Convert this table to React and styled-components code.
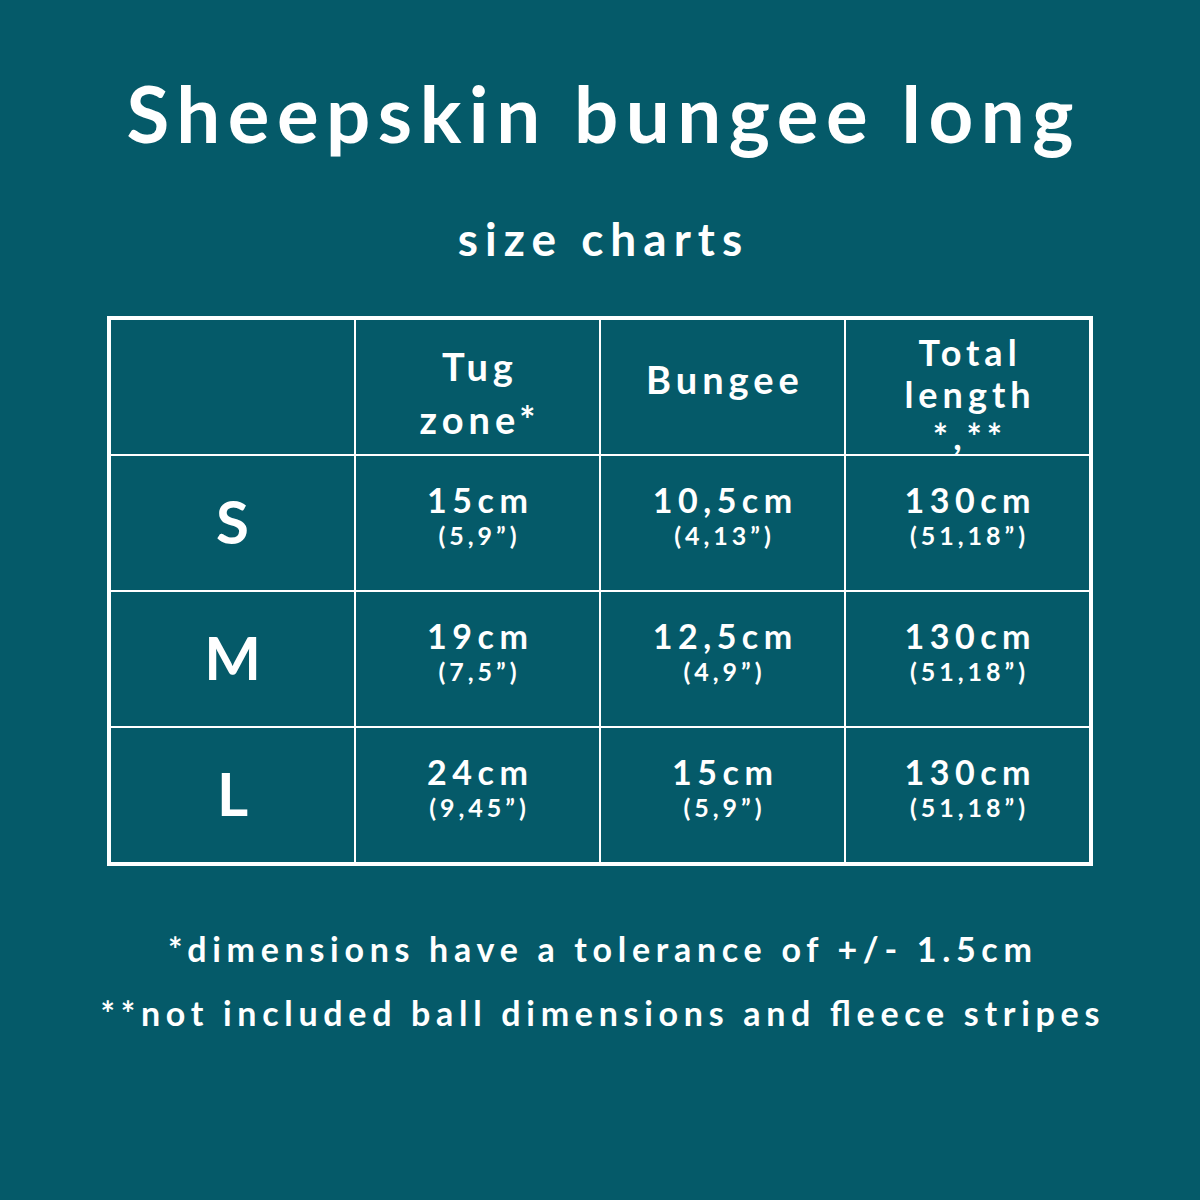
import React from 'react';
import styled, { createGlobalStyle } from 'styled-components';

const GlobalStyle = createGlobalStyle`
  html, body {
    margin: 0;
    padding: 0;
    background: #055a69;
  }
  body {
    font-family: "Lato", "DejaVu Sans", sans-serif;
    color: #ffffff;
  }
`;

const Page = styled.div`
  width: 1200px;
  height: 1200px;
  background: #055a69;
  display: flex;
  flex-direction: column;
  align-items: center;
  box-sizing: border-box;
  padding-top: 68px;
`;

const Title = styled.h1`
  margin: 0;
  font-size: 78px;
  font-weight: 700;
  letter-spacing: 7.5px;
  padding-left: 7.5px;
  line-height: 90px;
`;

const Subtitle = styled.h2`
  margin: 53px 0 0;
  font-size: 46px;
  font-weight: 700;
  letter-spacing: 7px;
  padding-left: 7px;
  line-height: 56px;
`;

const Table = styled.div`
  margin-top: 49px;
  display: grid;
  grid-template-columns: repeat(4, 243px);
  grid-template-rows: repeat(4, 134px);
  gap: 2px;
  background: #ffffff;
  border: 4px solid #ffffff;
`;

const Cell = styled.div`
  background: #055a69;
  display: flex;
  flex-direction: column;
  align-items: center;
  justify-content: center;
  text-align: center;
  overflow: visible;
  box-sizing: border-box;
  padding-top: ${(p) => p.$top || 0}px;
  padding-bottom: ${(p) => p.$bottom || 0}px;
`;

const HeadText = styled.div`
  font-size: ${(p) => p.$size || 38}px;
  font-weight: 700;
  letter-spacing: 5px;
  padding-left: 5px;
  line-height: ${(p) => p.$lh || 44}px;
`;

const SizeLabel = styled.div`
  font-size: 60px;
  font-weight: 700;
  line-height: 60px;
`;

const Metric = styled.div`
  font-size: 34px;
  font-weight: 700;
  letter-spacing: 5.5px;
  padding-left: 5.5px;
  line-height: 40px;
`;

const Imperial = styled.div`
  font-size: 25px;
  font-weight: 700;
  letter-spacing: 4px;
  padding-left: 4px;
  line-height: 30px;
`;

const Notes = styled.div`
  margin-top: 62px;
  display: flex;
  flex-direction: column;
  align-items: center;
  gap: 22px;
`;

const Note = styled.p`
  margin: 0;
  font-size: 34px;
  font-weight: 700;
  letter-spacing: 5.7px;
  padding-left: 5.7px;
  line-height: 42px;
`;

const rows = [
  { size: 'S', values: [['15cm', '(5,9”)'], ['10,5cm', '(4,13”)'], ['130cm', '(51,18”)']] },
  { size: 'M', values: [['19cm', '(7,5”)'], ['12,5cm', '(4,9”)'], ['130cm', '(51,18”)']] },
  { size: 'L', values: [['24cm', '(9,45”)'], ['15cm', '(5,9”)'], ['130cm', '(51,18”)']] },
];

const App = () => {
  return (
    <>
      <GlobalStyle />
      <Page>
        <Title>Sheepskin bungee long</Title>
        <Subtitle>size charts</Subtitle>
        <Table>
          <Cell />
          <Cell $top={11}>
            <HeadText $lh={53}>Tug<br />zone*</HeadText>
          </Cell>
          <Cell $bottom={16}>
            <HeadText>Bungee</HeadText>
          </Cell>
          <Cell $top={14}>
            <HeadText $lh={42} $size={36}>Total<br />length<br />*,**</HeadText>
          </Cell>
          {rows.map((row) => (
            <React.Fragment key={row.size}>
              <Cell $bottom={4}>
                <SizeLabel>{row.size}</SizeLabel>
              </Cell>
              {row.values.map(([cm, inch], i) => (
                <Cell key={i} $bottom={16}>
                  <Metric>{cm}</Metric>
                  <Imperial>{inch}</Imperial>
                </Cell>
              ))}
            </React.Fragment>
          ))}
        </Table>
        <Notes>
          <Note>*dimensions have a tolerance of +/- 1.5cm</Note>
          <Note>**not included ball dimensions and ﬂeece stripes</Note>
        </Notes>
      </Page>
    </>
  );
};

export default App;
